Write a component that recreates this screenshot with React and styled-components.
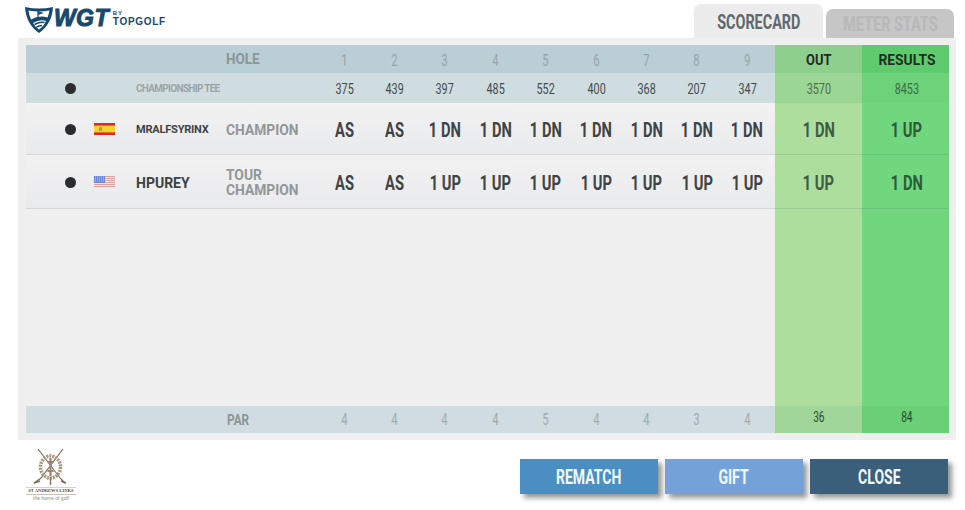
import React from 'react'
import styled, { createGlobalStyle } from 'styled-components'

const holes = [1, 2, 3, 4, 5, 6, 7, 8, 9]
const tee = [375, 439, 397, 485, 552, 400, 368, 207, 347]
const par = [4, 4, 4, 4, 5, 4, 4, 3, 4]

const players = [
    { name: 'MRALFSYRINX', small: true, flag: 'es', level: ['CHAMPION'], scores: ['AS', 'AS', '1 DN', '1 DN', '1 DN', '1 DN', '1 DN', '1 DN', '1 DN'], out: '1 DN', result: '1 UP', height: 52 },
    { name: 'HPUREY', flag: 'us', level: ['TOUR', 'CHAMPION'], scores: ['AS', 'AS', '1 UP', '1 UP', '1 UP', '1 UP', '1 UP', '1 UP', '1 UP'], out: '1 UP', result: '1 DN', height: 54 },
]

const Flag = ({ code }) => code === 'es' ? (
    <FlagSvg viewBox="0 0 21 12">
        <rect width="21" height="12" fill="#dc2a2a" />
        <rect y="2.6" width="21" height="6.8" fill="#f5d32c" />
        <rect x="5" y="4.2" width="3" height="3.6" fill="#d08a3e" />
    </FlagSvg>
) : (
    <FlagSvg viewBox="0 0 21 12">
        <rect width="21" height="12" fill="#f3e8e8" />
        {[0, 2, 4, 6, 8, 10].map(y => <rect key={y} y={y} width="21" height="1" fill="#e2a09e" />)}
        <rect width="11" height="7" fill="#6a86d6" />
        {[1, 3, 5].map(y => <path key={y} d={`M1 ${y}h9`} stroke="#d3dcf5" strokeWidth=".8" strokeDasharray="1 1" />)}
    </FlagSvg>
)

const Logo = () => (
    <LogoWrap>
        <svg width="28" height="28" viewBox="0 0 28 28">
            <path d="M0 2 Q14 5 28 2 Q27 19 14 28 Q1 19 0 2Z" fill="#17496f" />
            <path d="M3.5 5.5 Q14 7.5 24.5 5.5 Q24 9 22.5 12.5 Q14 10 6 14.5 Q4 10 3.5 5.5Z" fill="#fff" />
            <path d="M8 18 Q15 14 21 16 Q19 21 14 24.5 Q10 22 8 18Z" fill="#fff" />
            <path d="M9.5 19.5 Q15 16.5 19.5 17.5 M11 22.5 Q14 20.5 17 20.5" stroke="#17496f" strokeWidth="1.5" fill="none" />
            <path d="M13 12V6.5l4 1.5-4 1.5" stroke="#17496f" strokeWidth="1.2" fill="#17496f" />
        </svg>
        <WgtText>WGT</WgtText>
        <ByBlock>
            <small>BY</small>
            <span>TOPGOLF</span>
        </ByBlock>
    </LogoWrap>
)

const Crest = () => (
    <CrestWrap>
        <svg width="50" height="38" viewBox="0 0 50 38">
            <path d="M12 0 L34 29 L39 34 M37 0 L15 29 L8 34" stroke="#7d6a55" strokeWidth="1.1" fill="none" />
            <path d="M35 32 L40 34 M14 32 L8 34" stroke="#7d6a55" strokeWidth="1.8" />
            <ellipse cx="24.5" cy="18" rx="10" ry="11" fill="none" stroke="#ab967f" strokeWidth="3.6" strokeDasharray="2 1" />
            <path d="M24.5 9v18M21.5 13h6M21.5 22h6" stroke="#9a8570" strokeWidth="2.2" />
            <path d="M24.5 28v8" stroke="#8d7862" strokeWidth="1.5" />
        </svg>
        <CrestTitle>ST ANDREWS LINKS</CrestTitle>
        <CrestTag>the home of golf</CrestTag>
    </CrestWrap>
)

export default function App() {
    return (
        <Page>
            <GlobalStyle />
            <Header>
                <Logo />
                <Tabs>
                    <Tab $active><Squeeze $x={0.72}>SCORECARD</Squeeze></Tab>
                    <Tab><Squeeze $x={0.72}>METER STATS</Squeeze></Tab>
                </Tabs>
            </Header>

            <Panel>
                <Row $tone="#b9cfd5" $h={28}>
                    <Intro><HoleLabel><Squeeze $x={0.9}>HOLE</Squeeze></HoleLabel></Intro>
                    {holes.map(n => <Cell key={n} $color="#96a5aa" $size={16}><Squeeze $x={0.7}>{n}</Squeeze></Cell>)}
                    <Out $bg="#8fcf8d" $color="#222a22" $size={15} $bold><Squeeze $x={0.86}>OUT</Squeeze></Out>
                    <Result $bg="#5ecb6f" $color="#1f2f22" $size={15} $bold><Squeeze $x={0.92}>RESULTS</Squeeze></Result>
                </Row>

                <Row $tone="#cfdde0" $h={30}>
                    <Intro>
                        <Dot />
                        <TeeName>CHAMPIONSHIP TEE</TeeName>
                    </Intro>
                    {tee.map((n, i) => <Cell key={i} $color="#444a4c" $size={15}><Squeeze $x={0.72}>{n}</Squeeze></Cell>)}
                    <Out $bg="#9bd695" $color="#4d6a4d" $size={15}><Squeeze $x={0.72}>3570</Squeeze></Out>
                    <Result $bg="#6dd27a" $color="#3e6b49" $size={15}><Squeeze $x={0.72}>8453</Squeeze></Result>
                </Row>

                {players.map(p => (
                    <PlayerRow key={p.name} $h={p.height}>
                        <Intro>
                            <Dot />
                            <Flag code={p.flag} />
                            <PlayerName $small={p.small}>{p.name}</PlayerName>
                            <Level>{p.level.map(l => <LevelLine key={l}>{l}</LevelLine>)}</Level>
                        </Intro>
                        {p.scores.map((s, i) => <Cell key={i} $color="#3e4446" $size={21} $bold><Squeeze $x={0.7}>{s}</Squeeze></Cell>)}
                        <Out $bg="#aede9e" $color="#3f5c42" $size={21} $bold $line><Squeeze $x={0.7}>{p.out}</Squeeze></Out>
                        <Result $bg="#71d77e" $color="#2f5a3a" $size={21} $bold $line><Squeeze $x={0.7}>{p.result}</Squeeze></Result>
                    </PlayerRow>
                ))}

                <Spacer>
                    <Out $bg="#aede9e" />
                    <Result $bg="#71d77e" />
                </Spacer>

                <Row $tone="#d0dcdf" $h={27}>
                    <Intro><ParLabel><Squeeze $x={0.78}>PAR</Squeeze></ParLabel></Intro>
                    {par.map((n, i) => <ParCell key={i} $color="#a0abae" $size={16}><Squeeze $x={0.7}>{n}</Squeeze></ParCell>)}
                    <ParTotal $bg="#a0d69a" $color="#2f4a30" $size={14}><Squeeze $x={0.72}>36</Squeeze></ParTotal>
                    <ParResult $bg="#69d077" $color="#234a2c" $size={14}><Squeeze $x={0.72}>84</Squeeze></ParResult>
                </Row>
            </Panel>

            <Footer>
                <Crest />
                <Buttons>
                    <ActionButton $bg="#4b8fc2"><Squeeze $x={0.7}>REMATCH</Squeeze></ActionButton>
                    <ActionButton $bg="#74a2d8"><Squeeze $x={0.7}>GIFT</Squeeze></ActionButton>
                    <ActionButton $bg="#3a5f7a"><Squeeze $x={0.7}>CLOSE</Squeeze></ActionButton>
                </Buttons>
            </Footer>
        </Page>
    )
}

const GlobalStyle = createGlobalStyle`
    html, body {
        margin: 0;
        background: #fff;
        font-family: "Roboto", "Liberation Sans", sans-serif;
    }
`
const Page = styled.div`
    width: 965px;
    height: 510px;
    overflow: hidden;
`
const Header = styled.div`
    height: 38px;
    display: flex;
    justify-content: space-between;
    align-items: flex-end;
    padding: 0 11px 0 25px;
`
const LogoWrap = styled.div`
    display: flex;
    align-items: flex-start;
    align-self: flex-start;
    margin-top: 5px;
    svg { flex: none; }
`
const WgtText = styled.span`
    font: italic 700 23px/22px "Liberation Sans", sans-serif;
    color: #17496f;
    margin: 2px 0 0 1px;
    letter-spacing: 0.4px;
    -webkit-text-stroke: 1px #17496f;
`
const ByBlock = styled.div`
    display: flex;
    flex-direction: column;
    margin: 5px 0 0 4px;
    color: #17496f;
    font: 700 10px/10px "Liberation Sans", sans-serif;
    letter-spacing: 0.7px;
    small { font-size: 6px; line-height: 7px; }
`
const Tabs = styled.div`
    display: flex;
    align-items: flex-end;
    gap: 3px;
`
const Tab = styled.div`
    width: ${p => p.$active ? 129 : 128}px;
    height: ${p => p.$active ? 34 : 29}px;
    box-sizing: border-box;
    padding-top: 1px;
    background: ${p => p.$active ? '#ececec' : '#c6c6c6'};
    color: ${p => p.$active ? '#60686b' : '#b8b8b8'};
    border-radius: 7px 7px 0 0;
    display: flex;
    align-items: center;
    justify-content: center;
    font-size: 20px;
    font-weight: 700;
`
const Squeeze = styled.span`
    display: inline-block;
    white-space: pre;
    transform: scaleX(${p => p.$x || 0.8});
`
const Panel = styled.div`
    margin: 0 9px 0 18px;
    height: 402px;
    box-sizing: border-box;
    padding: 7px 7px 7px 8px;
    background: #efeff0;
    display: flex;
    flex-direction: column;
`
const Row = styled.div`
    display: grid;
    grid-template-columns: 293px repeat(9, 50.4px) 2.6px 87px 87px;
    height: ${p => p.$h}px;
    background: ${p => p.$tone};
`
const PlayerRow = styled(Row)`
    background: linear-gradient(#f2f2f3, #e9eaeb);
    box-shadow: inset 0 -1px 0 #d6d7d8;
`
const Spacer = styled(Row)`
    flex: 1;
    background: transparent;
`
const Intro = styled.div`
    position: relative;
    display: flex;
    align-items: center;
    padding-left: 39px;
`
const Dot = styled.div`
    width: 11px;
    height: 11px;
    border-radius: 50%;
    background: #2b2c2e;
    flex: none;
`
const FlagSvg = styled.svg`
    width: 21px;
    height: 12px;
    margin-left: 18px;
    flex: none;
`
const TeeName = styled.span`
    margin-left: 60px;
    font-size: 10px;
    font-weight: 700;
    color: #9ea4a6;
    letter-spacing: -0.7px;
    white-space: nowrap;
`
const PlayerName = styled.span`
    width: 90px;
    margin-left: 21px;
    padding-top: 1px;
    font-size: ${p => p.$small ? 11 : 14}px;
    font-weight: 700;
    color: #3d4244;
    flex: none;
    letter-spacing: ${p => p.$small ? -0.2 : 0}px;
`
const Level = styled.div`
    font-size: 15px;
    line-height: 15px;
    font-weight: 700;
    color: #929799;
    padding-top: 2px;
    white-space: nowrap;
`
const LevelLine = styled.div`
    transform: scaleX(0.92);
    transform-origin: left;
`
const HoleLabel = styled.div`
    position: absolute;
    left: 198px;
    top: 5px;
    font-size: 15px;
    font-weight: 700;
    color: #8a9699;
`
const ParLabel = styled(HoleLabel)`
    top: 5px;
`
const Cell = styled.div`
    display: flex;
    align-items: center;
    justify-content: center;
    padding-top: 2px;
    white-space: nowrap;
    color: ${p => p.$color};
    font-size: ${p => p.$size}px;
    font-weight: ${p => p.$bold ? 700 : 400};
`
const ParCell = styled(Cell)`
    padding-top: 0;
`
const Out = styled(Cell)`
    grid-column: 12;
    background: ${p => p.$bg};
    box-shadow: ${p => p.$line ? 'inset 0 -1px 0 rgba(80, 120, 80, 0.18)' : 'none'};
`
const Result = styled(Out)`
    grid-column: 13;
    padding-left: 2px;
`
const ParTotal = styled(Out)`
    padding-top: 0;
    padding-bottom: 6px;
`
const ParResult = styled(Result)`
    padding-top: 0;
    padding-bottom: 6px;
`
const Footer = styled.div`
    display: flex;
    justify-content: space-between;
    padding: 9px 17px 0 26px;
`
const CrestWrap = styled.div`
    width: 50px;
    text-align: center;
    color: #5c4e40;
    svg { display: block; }
`
const CrestTitle = styled.div`
    font: 700 4.6px/6px "Liberation Serif", serif;
    white-space: nowrap;
    border-top: 1px solid #d8d2ca;
    border-bottom: 1px solid #c9c3bb;
`
const CrestTag = styled.div`
    font: 400 5px/6px "Liberation Sans", sans-serif;
    color: #8f8a84;
`
const Buttons = styled.div`
    display: flex;
    gap: 7px;
    margin-top: 10px;
`
const ActionButton = styled.button`
    width: 138px;
    height: 35px;
    border: 0;
    padding: 0;
    font: 700 20px "Roboto", sans-serif;
    color: #f2f7fa;
    background: ${p => p.$bg};
    box-shadow: 4px 4px 5px rgba(60, 65, 70, 0.55);
`
